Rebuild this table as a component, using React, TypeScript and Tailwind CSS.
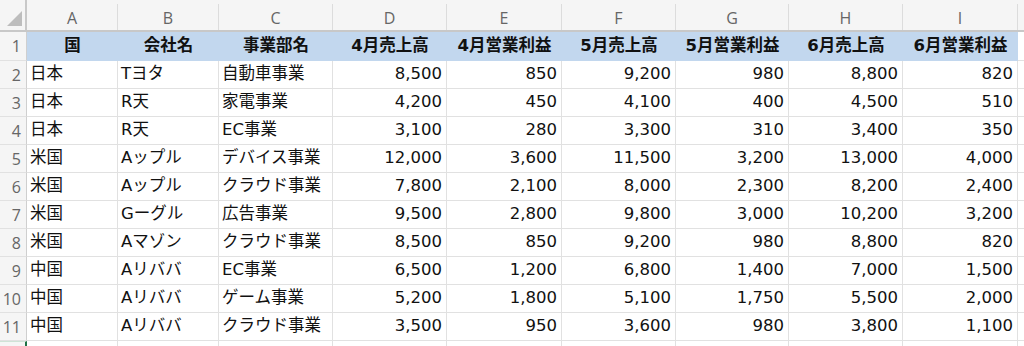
const widths = [91, 101, 114, 114, 115, 114, 113, 114, 115];
const letters = ['A', 'B', 'C', 'D', 'E', 'F', 'G', 'H', 'I'];
const headers = ['国', '会社名', '事業部名', '4月売上高', '4月営業利益', '5月売上高', '5月営業利益', '6月売上高', '6月営業利益'];

const rows: string[][] = [
  ['日本', 'Tヨタ', '自動車事業', '8,500', '850', '9,200', '980', '8,800', '820'],
  ['日本', 'R天', '家電事業', '4,200', '450', '4,100', '400', '4,500', '510'],
  ['日本', 'R天', 'EC事業', '3,100', '280', '3,300', '310', '3,400', '350'],
  ['米国', 'Aップル', 'デバイス事業', '12,000', '3,600', '11,500', '3,200', '13,000', '4,000'],
  ['米国', 'Aップル', 'クラウド事業', '7,800', '2,100', '8,000', '2,300', '8,200', '2,400'],
  ['米国', 'Gーグル', '広告事業', '9,500', '2,800', '9,800', '3,000', '10,200', '3,200'],
  ['米国', 'Aマゾン', 'クラウド事業', '8,500', '850', '9,200', '980', '8,800', '820'],
  ['中国', 'Aリババ', 'EC事業', '6,500', '1,200', '6,800', '1,400', '7,000', '1,500'],
  ['中国', 'Aリババ', 'ゲーム事業', '5,200', '1,800', '5,100', '1,750', '5,500', '2,000'],
  ['中国', 'Aリババ', 'クラウド事業', '3,500', '950', '3,600', '980', '3,800', '1,100'],
];

const cellFont = { fontFamily: '"DejaVu Sans", "Noto Sans CJK JP", sans-serif' };
const uiFont = { fontFamily: '"Open Sans", "Noto Sans", sans-serif' };

function RowHeader({ n, h }: { n: number; h: string }) {
  return (
    <div
      className={`${h} flex w-[27px] shrink-0 items-center justify-end border-r border-b border-r-[#cfcfcf] border-b-[#e1e1e1] bg-[#f5f5f5] pr-[5px] text-[16px] text-[#666]`}
      style={uiFont}
    >
      {n}
    </div>
  );
}

export default function App() {
  return (
    <div className="h-[346px] w-[1024px] overflow-hidden bg-white">
      {/* column letters */}
      <div className="flex h-[32px] border-b-2 border-[#c8c8c8] bg-[#f5f5f5]" style={uiFont}>
        <div className="relative w-[27px] shrink-0 border-r-2 border-[#c8c8c8]">
          <svg className="absolute right-[3px] bottom-[4px]" width="15" height="15" viewBox="0 0 15 15">
            <polygon points="15,0 15,15 0,15" fill="#bdbdbd" />
          </svg>
        </div>
        {letters.map((l, i) => (
          <div key={l} className="flex shrink-0 flex-col" style={{ width: widths[i] }}>
            <div className="h-[8px]" />
            <div className="flex flex-1 items-center justify-center border-r border-[#dcdcdc] pt-[2px] text-[16px] text-[#666]">
              {l}
            </div>
          </div>
        ))}
        <div className="flex-1" />
      </div>

      {/* header row */}
      <div className="flex h-[29px]" style={cellFont}>
        <RowHeader n={1} h="h-[29px]" />
        {headers.map((t, i) => (
          <div
            key={t}
            className="flex shrink-0 items-center justify-center bg-[#c2d7ee] text-[16.5px] font-bold text-[#111]"
            style={{ width: widths[i] }}
          >
            {t}
          </div>
        ))}
        <div className="flex-1 border-b border-[#e1e1e1]" />
      </div>

      {/* data */}
      {rows.map((r, ri) => (
        <div key={ri} className="flex h-[28px]" style={cellFont}>
          <RowHeader n={ri + 2} h="h-[28px]" />
          {r.map((v, ci) => (
            <div
              key={ci}
              className={`flex shrink-0 items-center border-r border-b border-[#e1e1e1] text-[16.5px] text-[#111] ${
                ci < 3 ? 'justify-start pl-[3px]' : 'justify-end pr-[4px]'
              }`}
              style={{ width: widths[ci] }}
            >
              {v}
            </div>
          ))}
          <div className="flex-1 border-b border-[#e1e1e1]" />
        </div>
      ))}

      {/* partial row 12 */}
      <div className="flex h-[28px]">
        <div className="h-[28px] w-[27px] shrink-0 border-t border-r-2 border-t-[#cfe3d6] border-r-[#1e7145] bg-[#f5f5f5]" />
        {widths.map((w, i) => (
          <div key={i} className="h-[28px] shrink-0 border-r border-[#e1e1e1]" style={{ width: w }} />
        ))}
      </div>
    </div>
  );
}
